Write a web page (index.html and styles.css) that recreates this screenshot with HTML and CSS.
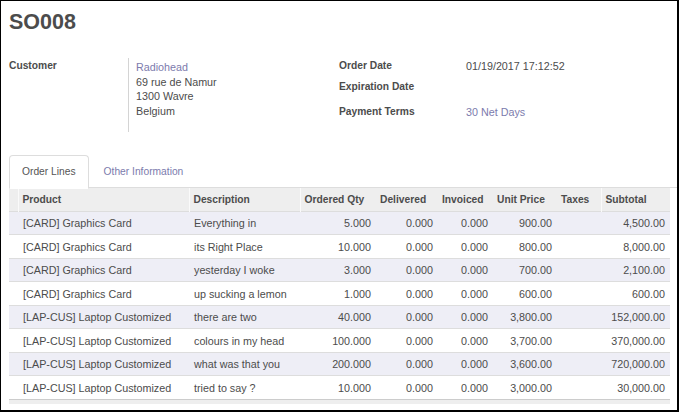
FILE: index.html
```html
<!DOCTYPE html>
<html>
<head>
<meta charset="utf-8">
<link rel="stylesheet" href="styles.css">
</head>
<body>
<div class="frame">
  <h1 class="title">SO008</h1>
  <div class="groups">
    <div class="group left">
      <div class="label lbl-customer">Customer</div>
      <div class="address">
        <a class="link">Radiohead</a>
        <div>69 rue de Namur</div>
        <div>1300 Wavre</div>
        <div>Belgium</div>
      </div>
    </div>
    <div class="group right">
      <div class="row r1"><div class="label rlabel">Order Date</div><div class="value">01/19/2017 17:12:52</div></div>
      <div class="row r2"><div class="label rlabel">Expiration Date</div><div class="value"></div></div>
      <div class="row r3"><div class="label rlabel">Payment Terms</div><div class="value link">30 Net Days</div></div>
    </div>
  </div>
  <div class="tabs">
    <div class="tab active">Order Lines</div>
    <div class="tab link">Other Information</div>
  </div>
  <table class="lines">
    <colgroup>
      <col class="c-handle"><col class="c-product"><col class="c-desc"><col class="c-qty"><col class="c-deliv"><col class="c-inv"><col class="c-price"><col class="c-tax"><col class="c-sub">
    </colgroup>
    <thead>
      <tr>
        <th class="handle"></th>
        <th class="sep">Product</th>
        <th class="sep">Description</th>
        <th class="sep">Ordered Qty</th>
        <th>Delivered</th>
        <th>Invoiced</th>
        <th>Unit Price</th>
        <th>Taxes</th>
        <th class="sep">Subtotal</th>
      </tr>
    </thead>
    <tbody>
      <tr><td></td><td>[CARD] Graphics Card</td><td>Everything in</td><td class="num">5.000</td><td class="num">0.000</td><td class="num">0.000</td><td class="num">900.00</td><td></td><td class="num">4,500.00</td></tr>
      <tr><td></td><td>[CARD] Graphics Card</td><td>its Right Place</td><td class="num">10.000</td><td class="num">0.000</td><td class="num">0.000</td><td class="num">800.00</td><td></td><td class="num">8,000.00</td></tr>
      <tr><td></td><td>[CARD] Graphics Card</td><td>yesterday I woke</td><td class="num">3.000</td><td class="num">0.000</td><td class="num">0.000</td><td class="num">700.00</td><td></td><td class="num">2,100.00</td></tr>
      <tr><td></td><td>[CARD] Graphics Card</td><td>up sucking a lemon</td><td class="num">1.000</td><td class="num">0.000</td><td class="num">0.000</td><td class="num">600.00</td><td></td><td class="num">600.00</td></tr>
      <tr><td></td><td>[LAP-CUS] Laptop Customized</td><td>there are two</td><td class="num">40.000</td><td class="num">0.000</td><td class="num">0.000</td><td class="num">3,800.00</td><td></td><td class="num">152,000.00</td></tr>
      <tr><td></td><td>[LAP-CUS] Laptop Customized</td><td>colours in my head</td><td class="num">100.000</td><td class="num">0.000</td><td class="num">0.000</td><td class="num">3,700.00</td><td></td><td class="num">370,000.00</td></tr>
      <tr><td></td><td>[LAP-CUS] Laptop Customized</td><td>what was that you</td><td class="num">200.000</td><td class="num">0.000</td><td class="num">0.000</td><td class="num">3,600.00</td><td></td><td class="num">720,000.00</td></tr>
      <tr><td></td><td>[LAP-CUS] Laptop Customized</td><td>tried to say ?</td><td class="num">10.000</td><td class="num">0.000</td><td class="num">0.000</td><td class="num">3,000.00</td><td></td><td class="num">30,000.00</td></tr>
    </tbody>
    <tfoot>
      <tr><td colspan="9"></td></tr>
    </tfoot>
  </table>
</div>
</body>
</html>
```
FILE: styles.css
```css
html, body {
  margin: 0;
  padding: 0;
  background: #fff;
}
.frame {
  width: 679px;
  height: 412px;
  box-sizing: border-box;
  border: 1px solid #000;
  border-right-width: 2px;
  border-bottom-width: 2px;
  padding: 8px 0 0 8px;
  font-family: "Liberation Sans", Arial, sans-serif;
  font-size: 10.75px;
  color: #4c4c4c;
  overflow: hidden;
}
.title {
  margin: 0;
  font-size: 21.5px;
  line-height: 26px;
  font-weight: bold;
  color: #4c4c4c;
}
.groups {
  display: flex;
  margin-top: 23px;
}
.label {
  font-weight: bold;
  font-size: 10.25px;
  color: #4c4c4c;
}
.link {
  color: #7c7bad;
}
.group.left {
  display: flex;
  width: 330px;
}
.lbl-customer {
  width: 119px;
  line-height: 16px;
}
.address {
  border-left: 1px solid #d4d4d4;
  padding: 2px 0 13px 7px;
  line-height: 14.7px;
}
.address .link {
  display: block;
}
.group.right {
  display: flex;
  flex-direction: column;
}
.row {
  display: flex;
  line-height: 16px;
}
.r1 { height: 21px; }
.r2 { height: 25px; }
.r3 { height: 16px; }
.rlabel {
  width: 127px;
}
.tabs {
  display: flex;
  margin-top: 23px;
  height: 32px;
  border-bottom: 1px solid #ddd;
}
.tab {
  padding: 0 12px;
  border: 1px solid transparent;
  border-radius: 4px 4px 0 0;
  margin-right: 2px;
  line-height: 31px;
  height: 31px;
  font-size: 10.25px;
}
.tab.active {
  border-color: #ddd;
  border-bottom-color: #fff;
  background: #fff;
  color: #555;
  height: 32px;
}
.lines {
  width: 661px;
  border-collapse: collapse;
  table-layout: fixed;
  margin-top: -1px;
}
.c-handle { width: 9px; }
.c-product { width: 171px; }
.c-desc { width: 111px; }
.c-qty { width: 76px; }
.c-deliv { width: 62px; }
.c-inv { width: 55px; }
.c-price { width: 64px; }
.c-tax { width: 44px; }
.c-sub { width: 69px; }
.lines th {
  background: #eee;
  font-weight: bold;
  font-size: 10.25px;
  text-align: left;
  height: 24px;
  padding: 0 4px;
  box-sizing: border-box;
  white-space: nowrap;
  overflow: hidden;
  border-top: 1px solid #ddd;
}
.lines th.sep {
  border-left: 1px solid #fafafa;
}
.lines td {
  height: 23.5px;
  padding: 0 4px;
  box-sizing: border-box;
  border-top: 1px solid #ddd;
  white-space: nowrap;
  overflow: hidden;
}
.lines tbody td:nth-child(2),
.lines tbody td:nth-child(3) {
  padding-left: 5px;
}
.lines tbody tr:nth-child(odd) {
  background: #eeeef6;
}
.lines td.num {
  text-align: right;
  padding-right: 5px;
}
.lines tfoot td {
  height: 5px;
  background: #eee;
  border-top: 1px solid #ccc;
  padding: 0;
}
```
